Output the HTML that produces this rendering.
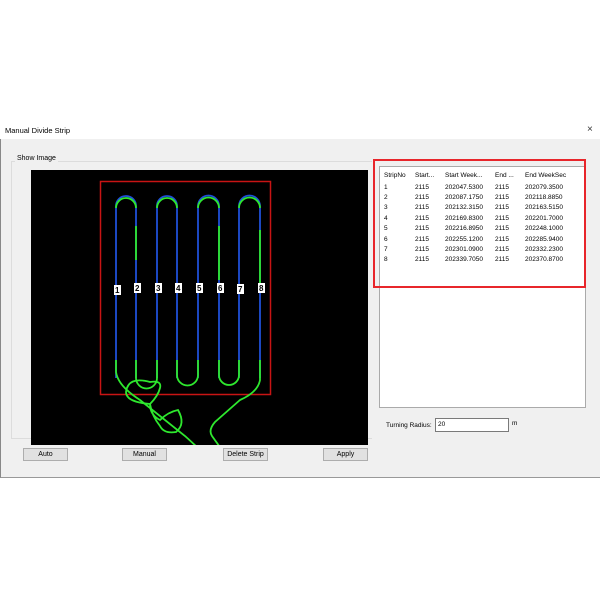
<!DOCTYPE html>
<html><head><style>
body{margin:0;width:600px;height:600px;background:#fff;font-family:"Liberation Sans",sans-serif;font-size:7px;color:#000;position:relative;overflow:hidden}
.a{position:absolute}
.btn{position:absolute;top:448px;height:13px;background:#e1e1e1;border:1px solid #adadad;box-sizing:border-box;text-align:center;line-height:11px;font-size:7px}
table{border-collapse:collapse;font-size:6.5px;table-layout:fixed}
td{padding:0 0 0 4px;height:10.4px;white-space:nowrap;overflow:hidden}
</style></head><body>
<div class="a" style="left:0;top:117px;width:600px;height:361px;background:#f0f0f0;border-left:1px solid #888;border-bottom:1px solid #999;box-sizing:border-box"></div>
<div class="a" style="left:0;top:117px;width:600px;height:22px;background:#fff"></div>
<div class="a" style="left:5px;top:126px;font-size:7.5px">Manual Divide Strip</div>
<div class="a" style="left:587px;top:124px;font-size:10px;color:#333">×</div>
<div class="a" style="left:11px;top:161px;width:360px;height:276px;border:1px solid #dcdcdc;border-right:none"></div>
<div class="a" style="left:15px;top:155px;background:#f0f0f0;padding:0 2px;font-size:7px">Show Image</div>
<svg class="a" style="left:31px;top:170px" width="337" height="275" viewBox="31 170 337 275">
<rect x="31" y="170" width="337" height="275" fill="#000"/>
<rect x="100.5" y="181.5" width="170" height="213" fill="none" stroke="#c81414" stroke-width="1.5"/>
<g fill="none" stroke-width="1.8">
<path d="M116 378V206 A10 10 0 0 1 136 206V378" stroke="#2050d8"/>
<path d="M157 378V206 A10 10 0 0 1 177 206V378" stroke="#2050d8"/>
<path d="M198 378V206 A10.5 10.5 0 0 1 219 206V378" stroke="#2050d8"/>
<path d="M239 378V206 A10.5 10.5 0 0 1 260 206V378" stroke="#2050d8"/>
<g stroke="#2ee82e">
<path d="M116 208A10 10 0 0 1 136 208"/><path d="M157 208A10 10 0 0 1 177 208"/><path d="M198 208A10.5 10.5 0 0 1 219 208"/><path d="M239 208A10.5 10.5 0 0 1 260 208"/>
<path d="M136 226V260M219 226V280M260 230V290"/>
<path d="M177 360V375A10.5 10.5 0 0 0 198 375V360"/>
<path d="M219 360V375A10 10 0 0 0 239 375V360"/>
<path d="M136 360V378A10.5 10.5 0 0 0 157 378V360"/>
<path d="M116 360V372Q118 386 140 400L185 436Q195 445 200 450"/>
<path d="M260 360V380Q258 392 240 400L215 422Q208 430 212 436L222 450"/>
<path d="M150 382Q128 376 126 392Q126 402 150 404Q158 396 160 388Q162 380 150 382Z"/>
<path d="M150 404Q150 415 160 420Q168 412 178 410Q186 424 176 432Q164 434 160 426Q152 416 150 404"/>
</g></g>
<g font-size="8" font-weight="bold" fill="#000">
<rect x="114" y="285" width="7" height="10" fill="#fff"/><text x="115" y="293">1</text>
<rect x="134" y="283" width="7" height="10" fill="#fff"/><text x="135" y="291">2</text>
<rect x="155" y="283" width="7" height="10" fill="#fff"/><text x="156" y="291">3</text>
<rect x="175" y="283" width="7" height="10" fill="#fff"/><text x="176" y="291">4</text>
<rect x="196" y="283" width="7" height="10" fill="#fff"/><text x="197" y="291">5</text>
<rect x="217" y="283" width="7" height="10" fill="#fff"/><text x="218" y="291">6</text>
<rect x="237" y="284" width="7" height="10" fill="#fff"/><text x="238" y="292">7</text>
<rect x="258" y="283" width="7" height="10" fill="#fff"/><text x="259" y="291">8</text>
</g>
</svg>
<div class="a" style="left:379px;top:166px;width:207px;height:242px;background:#fff;border:1px solid #aaa;box-sizing:border-box">
<table style="margin-top:2px;width:196px">
<colgroup><col style="width:31px"><col style="width:30px"><col style="width:50px"><col style="width:30px"><col style="width:55px"></colgroup>
<tr style="height:13px"><td>StripNo</td><td>Start...</td><td>Start Week...</td><td>End ...</td><td>End WeekSec</td></tr>
<tr><td>1</td><td>2115</td><td>202047.5300</td><td>2115</td><td>202079.3500</td></tr>
<tr><td>2</td><td>2115</td><td>202087.1750</td><td>2115</td><td>202118.8850</td></tr>
<tr><td>3</td><td>2115</td><td>202132.3150</td><td>2115</td><td>202163.5150</td></tr>
<tr><td>4</td><td>2115</td><td>202169.8300</td><td>2115</td><td>202201.7000</td></tr>
<tr><td>5</td><td>2115</td><td>202216.8950</td><td>2115</td><td>202248.1000</td></tr>
<tr><td>6</td><td>2115</td><td>202255.1200</td><td>2115</td><td>202285.9400</td></tr>
<tr><td>7</td><td>2115</td><td>202301.0900</td><td>2115</td><td>202332.2300</td></tr>
<tr><td>8</td><td>2115</td><td>202339.7050</td><td>2115</td><td>202370.8700</td></tr>
</table></div>
<div class="a" style="left:373px;top:159px;width:213px;height:129px;border:2px solid #e8262b;box-sizing:border-box"></div>
<div class="a" style="left:386px;top:422px;font-size:6.5px">Turning Radius:</div>
<div class="a" style="left:435px;top:418px;width:74px;height:14px;background:#fff;border:1px solid #7a7a7a;box-sizing:border-box;font-size:6.5px;padding:2px 2px">20</div>
<div class="a" style="left:512px;top:420px;font-size:6.5px">m</div>
<div class="btn" style="left:23px;width:45px">Auto</div>
<div class="btn" style="left:122px;width:45px">Manual</div>
<div class="btn" style="left:223px;width:45px">Delete Strip</div>
<div class="btn" style="left:323px;width:45px">Apply</div>
</body></html>
